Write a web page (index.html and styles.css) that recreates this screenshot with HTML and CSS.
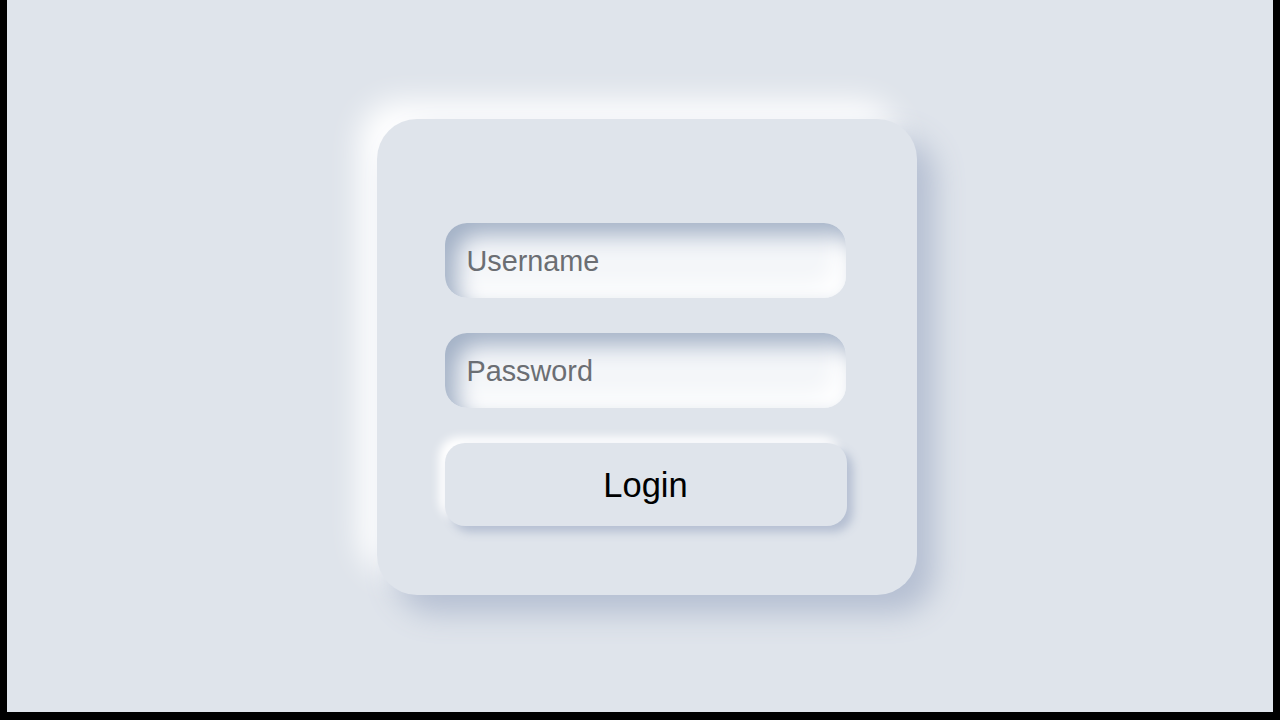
FILE: index.html
```html
<!DOCTYPE html>
<html>

<head>
    <title>Login</title>
    <link rel="stylesheet" href="styles.css">
</head>

<body>
    <!-- Screen area -->
    <div class="screen">
        <!-- Login card -->
        <form class="login-card" onsubmit="return false;">
            <input type="text" class="field" placeholder="Username">
            <input type="password" class="field" placeholder="Password">
            <button type="submit" class="login-button">Login</button>
        </form>
    </div>
</body>

</html>
```

FILE: styles.css
```css
/* Page frame */
html {
    background-color: #000;
}

body {
    margin: 0;
    font-family: "Liberation Sans", Arial, sans-serif;
}

.screen {
    width: 1266px;
    height: 712px;
    margin-left: 7px;
    background-color: #dfe4eb;
    display: flex;
    align-items: center;
    justify-content: center;
    box-sizing: border-box;
    padding-left: 13px;
    padding-top: 2px;
    overflow: hidden;
}

/* Card */
.login-card {
    width: 540px;
    height: 476px;
    box-sizing: border-box;
    padding: 104px 70px 0 68px;
    background-color: #dfe4eb;
    border-radius: 40px;
    box-shadow: 18px 18px 30px #b5bfd2, -18px -18px 30px #ffffff;
    display: flex;
    flex-direction: column;
    gap: 35px;
}

/* Inputs */
.field {
    height: 75px;
    width: 401px;
    box-sizing: border-box;
    border: none;
    outline: none;
    border-radius: 22px;
    padding: 2px 22px 0;
    background-color: #f4f6f9;
    box-shadow: inset 12px 12px 22px #a3b1c6, inset -12px -12px 22px #ffffff;
    font-family: "Liberation Sans", Arial, sans-serif;
    font-size: 28.8px;
    color: #333;
}

.field::placeholder {
    color: #6b6e73;
}

/* Button */
.login-button {
    height: 83px;
    width: 402px;
    border: none;
    border-radius: 20px;
    padding-top: 2px;
    background-color: #dfe4eb;
    box-shadow: 6px 6px 10px #b5bfd2, -6px -6px 10px #ffffff;
    font-family: "Liberation Sans", Arial, sans-serif;
    font-size: 34.5px;
    color: #000;
    cursor: pointer;
}
```
